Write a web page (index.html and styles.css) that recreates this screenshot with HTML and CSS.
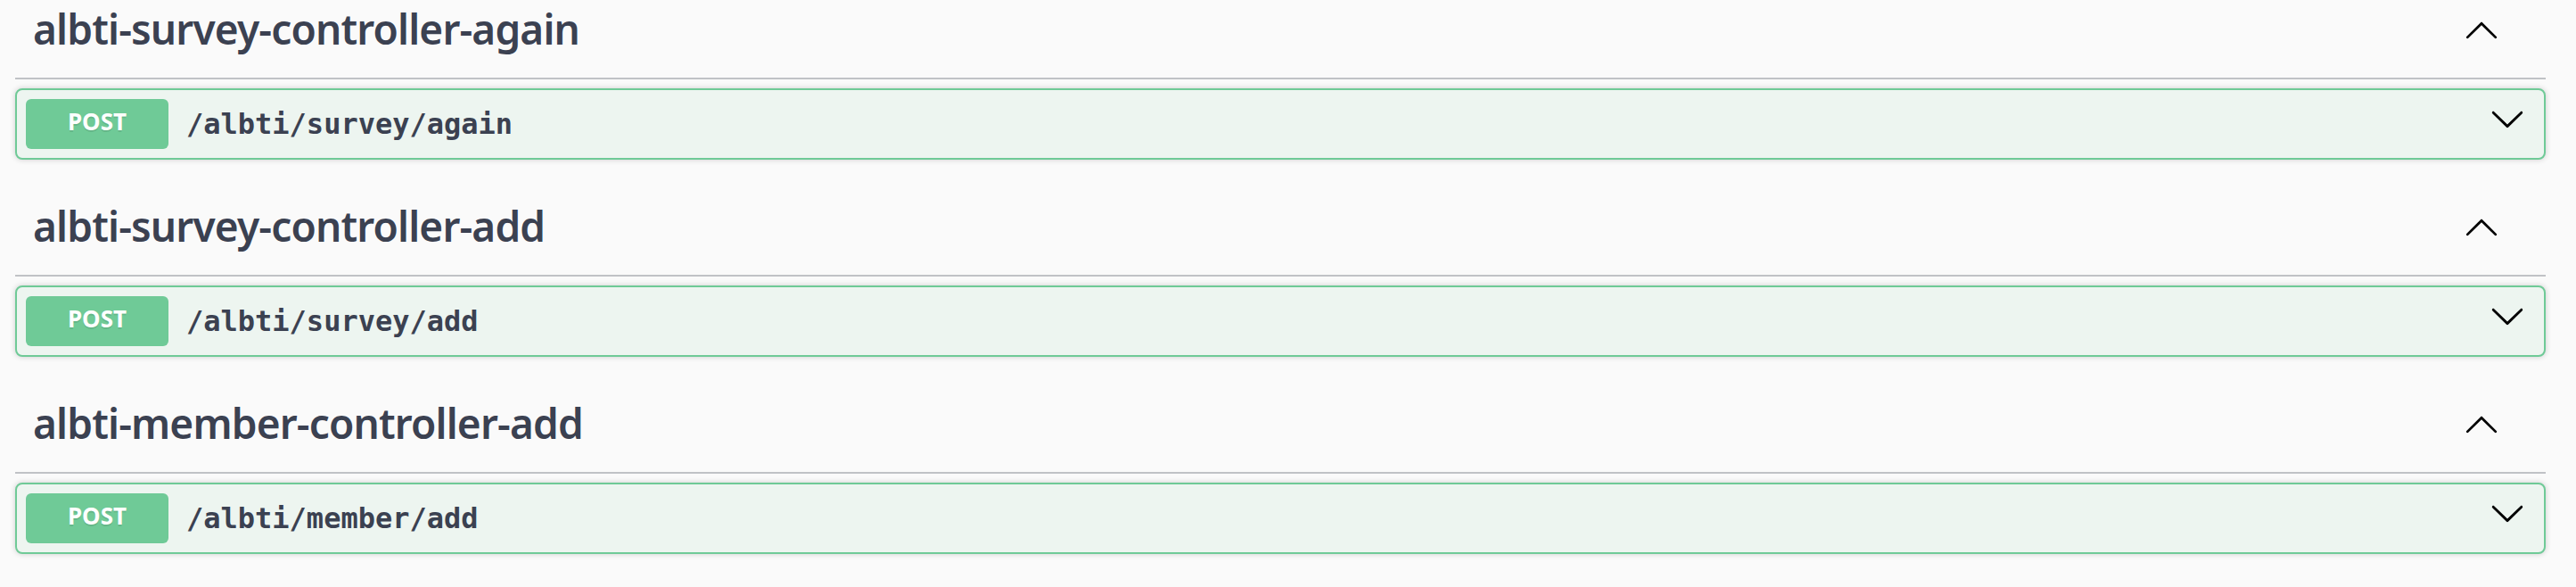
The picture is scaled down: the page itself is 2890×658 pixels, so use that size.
FILE: index.html
```html
<!DOCTYPE html>
<html lang="en">
<head>
<meta charset="utf-8">
<title>Swagger UI</title>
<link rel="stylesheet" href="styles.css">
</head>
<body>
<div class="page">
  <section class="tag-section">
    <h3 class="tag">
      <span class="tag-title">albti-survey-controller-again</span>
      <button class="expand" aria-label="collapse">
        <svg class="arrow" viewBox="0 0 20 20" width="40" height="40"><path d="M17.418 14.908c.272.268.709.268.979 0s.271-.701 0-.969l-7.908-7.830c-.27-.268-.707-.268-.979 0l-7.908 7.830c-.27.268-.27.701 0 .969.271.268.709.268.979 0L10 7.586l7.418 7.322z"/></svg>
      </button>
    </h3>
    <div class="opblock">
      <div class="summary">
        <span class="method">POST</span>
        <span class="path">/albti/survey/again</span>
        <svg class="arrow arrow-down" viewBox="0 0 20 20" width="40" height="40"><path d="M17.418 6.109c.272-.268.709-.268.979 0s.271.701 0 .969l-7.908 7.83c-.27.268-.707.268-.979 0l-7.908-7.83c-.27-.268-.27-.701 0-.969.271-.268.709-.268.979 0L10 13.25l7.418-7.141z"/></svg>
      </div>
    </div>
  </section>
  <section class="tag-section">
    <h3 class="tag">
      <span class="tag-title">albti-survey-controller-add</span>
      <button class="expand" aria-label="collapse">
        <svg class="arrow" viewBox="0 0 20 20" width="40" height="40"><path d="M17.418 14.908c.272.268.709.268.979 0s.271-.701 0-.969l-7.908-7.830c-.27-.268-.707-.268-.979 0l-7.908 7.830c-.27.268-.27.701 0 .969.271.268.709.268.979 0L10 7.586l7.418 7.322z"/></svg>
      </button>
    </h3>
    <div class="opblock">
      <div class="summary">
        <span class="method">POST</span>
        <span class="path">/albti/survey/add</span>
        <svg class="arrow arrow-down" viewBox="0 0 20 20" width="40" height="40"><path d="M17.418 6.109c.272-.268.709-.268.979 0s.271.701 0 .969l-7.908 7.83c-.27.268-.707.268-.979 0l-7.908-7.83c-.27-.268-.27-.701 0-.969.271-.268.709-.268.979 0L10 13.25l7.418-7.141z"/></svg>
      </div>
    </div>
  </section>
  <section class="tag-section">
    <h3 class="tag">
      <span class="tag-title">albti-member-controller-add</span>
      <button class="expand" aria-label="collapse">
        <svg class="arrow" viewBox="0 0 20 20" width="40" height="40"><path d="M17.418 14.908c.272.268.709.268.979 0s.271-.701 0-.969l-7.908-7.830c-.27-.268-.707-.268-.979 0l-7.908 7.830c-.27.268-.27.701 0 .969.271.268.709.268.979 0L10 7.586l7.418 7.322z"/></svg>
      </button>
    </h3>
    <div class="opblock">
      <div class="summary">
        <span class="method">POST</span>
        <span class="path">/albti/member/add</span>
        <svg class="arrow arrow-down" viewBox="0 0 20 20" width="40" height="40"><path d="M17.418 6.109c.272-.268.709-.268.979 0s.271.701 0 .969l-7.908 7.83c-.27.268-.707.268-.979 0l-7.908-7.83c-.27-.268-.27-.701 0-.969.271-.268.709-.268.979 0L10 13.25l7.418-7.141z"/></svg>
      </div>
    </div>
  </section>
</div>
</body>
</html>
```
FILE: styles.css
```css
html, body {
  margin: 0;
  background: #fafafa;
}

.page {
  margin-top: -12px;
  padding: 0 34px 0 17px;
}

.tag-section {
  display: flex;
  flex-direction: column;
}

.tag {
  display: flex;
  align-items: center;
  margin: 0 0 10px;
  padding: 15px 40px 25px 20px;
  border-bottom: 2px solid rgba(59, 65, 81, 0.3);
  font-family: "Noto Sans", "Noto Sans CJK KR", sans-serif;
  font-size: 46px;
  font-weight: 600;
  letter-spacing: -0.85px;
  color: #3b4151;
}

.tag-title {
  flex: 1;
  line-height: 59px;
}

.expand {
  display: flex;
  margin: 0 12px 0 0;
  padding: 0;
  border: none;
  background: none;
}

.arrow {
  display: block;
  width: 40px;
  height: 40px;
  fill: #000;
  flex: none;
}

.opblock {
  margin: 0 0 30px;
  border: 2px solid #6fca97;
  border-radius: 8px;
  background: #edf5f0;
  box-shadow: 0 0 6px rgba(0, 0, 0, 0.19);
}

.summary {
  display: flex;
  align-items: center;
  padding: 10px;
}

.method {
  flex: none;
  min-width: 160px;
  padding: 9px 0 15px;
  line-height: 32px;
  text-align: center;
  background: #6fca97;
  color: #fff;
  border-radius: 6px;
  font-family: "Noto Sans", sans-serif;
  font-size: 26px;
  font-weight: 700;
  text-shadow: 0 2px 0 rgba(0, 0, 0, 0.1);
}

.path {
  flex: 1;
  padding: 0 20px;
  font-family: "DejaVu Sans Mono", monospace;
  font-size: 32px;
  font-weight: 700;
  color: #3b4151;
}

.arrow-down {
  margin: 0 11px 12px 0;
}
```
